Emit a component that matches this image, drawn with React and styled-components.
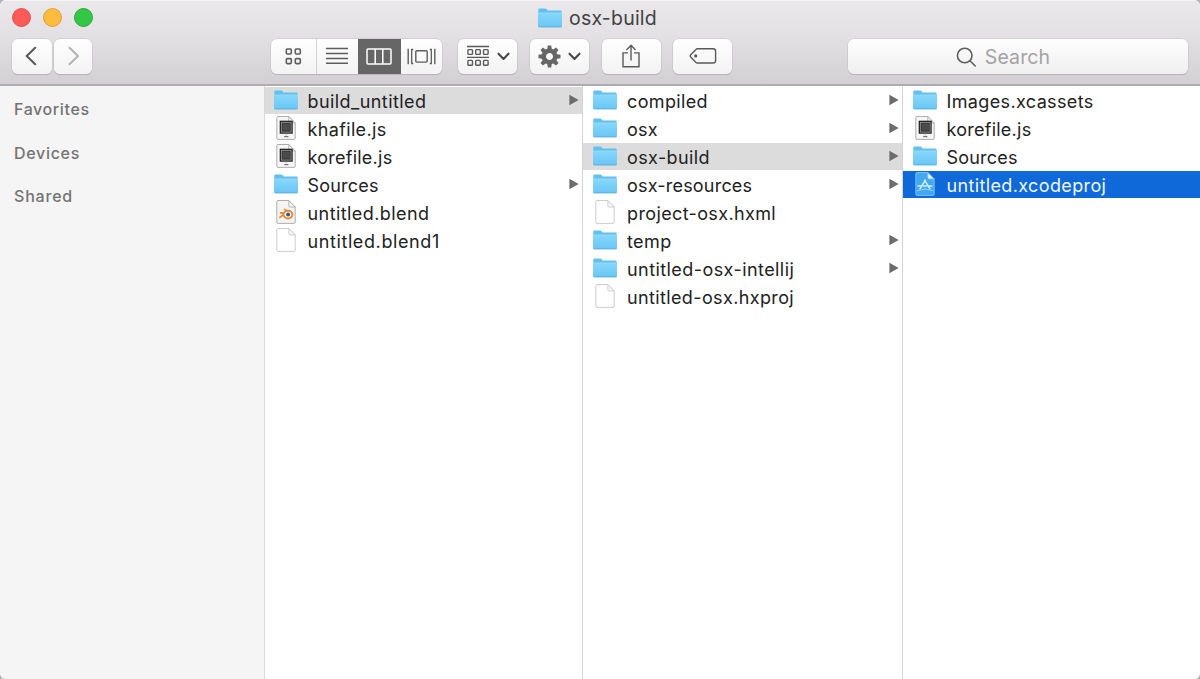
import React from "react";
import styled, { createGlobalStyle } from "styled-components";

const Global = createGlobalStyle`
  * { box-sizing: border-box; }
  body { margin: 0; background: #b4b4b4; }
`;

const Window = styled.div`
  width: 1200px;
  height: 679px;
  display: flex;
  flex-direction: column;
  overflow: hidden;
  border-radius: 6px;
  background: #fff;
  color: #222;
  font-family: Inter, "Liberation Sans", sans-serif;
`;

const Header = styled.header`
  flex: none;
  height: 86px;
  background: linear-gradient(#eae8eb 0, #e5e2e5 35%, #d2d0d3 100%);
  border-top: 1px solid #f5f4f5;
  border-bottom: 2px solid #b0adb0;
`;

const TitleBar = styled.div`
  height: 33px;
  display: grid;
  grid-template-columns: 1fr auto 1fr;
  align-items: center;
  padding: 0 18px 0 12px;
`;

const Lights = styled.div`
  display: flex;
  gap: 12.2px;
`;

const Light = styled.span`
  width: 19px;
  height: 19px;
  border-radius: 50%;
  background: ${(p) => p.$fill};
  border: 1px solid ${(p) => p.$edge};
`;

const Title = styled.div`
  display: flex;
  align-items: center;
  gap: 6px;
  font-size: 19.5px;
  line-height: 30px;
  letter-spacing: 0.2px;
  color: #424142;
`;

const ToolBar = styled.div`
  height: 44px;
  display: flex;
  align-items: center;
  padding: 0 12px;
`;

const Button = styled.button`
  height: 35px;
  width: ${(p) => p.$width}px;
  margin: 0 ${(p) => p.$after || 0}px 0 0;
  padding: 0 ${(p) => p.$padRight || 0}px 0 ${(p) => p.$padLeft || 0}px;
  display: flex;
  align-items: center;
  justify-content: center;
  gap: 7px;
  border: 0;
  border-radius: 6px;
  background: linear-gradient(#fefefe, #f4f3f4);
  box-shadow: 0 0 0 0.5px #c4c2c4, 0 1px 1px #aaa8aa;
  color: #5a5a5a;
`;

const Segments = styled.div`
  height: 35px;
  display: flex;
  margin-right: 16px;
  overflow: hidden;
  border-radius: 6px;
  background: linear-gradient(#fefefe, #f4f3f4);
  box-shadow: 0 0 0 0.5px #c4c2c4, 0 1px 1px #aaa8aa;
`;

const Segment = styled.div`
  width: ${(p) => p.$width}px;
  padding-right: ${(p) => p.$padRight || 0}px;
  display: flex;
  align-items: center;
  justify-content: center;
  border-right: ${(p) => (p.$divided ? "1px solid #d3d2d3" : "0")};
  color: ${(p) => (p.$active ? "#fff" : "#5d5d5d")};
  background: ${(p) => (p.$active ? "#676667" : "transparent")};
`;

const Search = styled.div`
  width: 340px;
  height: 35px;
  margin-left: auto;
  padding: 2px 30px 0 0;
  display: flex;
  align-items: center;
  justify-content: center;
  gap: 8px;
  border-radius: 6px;
  background: linear-gradient(#fefefe, #f0eff0);
  box-shadow: 0 0 0 0.5px #c4c2c4, 0 1px 1px #aaa8aa;
  color: #a3a2a3;
  font-size: 19.5px;
  letter-spacing: 0.1px;
`;

const Body = styled.main`
  flex: 1;
  min-height: 0;
  display: grid;
  grid-template-columns: 265px 318px 320px 1fr;
`;

const Sidebar = styled.nav`
  display: flex;
  flex-direction: column;
  gap: 19.5px;
  padding: 11px 14px;
  background: #f5f5f5;
  border-right: 1px solid #d9d9d9;
`;

const SideLabel = styled.div`
  height: 24px;
  line-height: 24px;
  font-size: 16px;
  font-weight: 500;
  letter-spacing: ${(p) => p.$spacing}px;
  color: #737373;
`;

const Column = styled.section`
  display: flex;
  flex-direction: column;
  gap: 1px;
  padding-top: 1px;
  background: #fff;
  border-right: ${(p) => (p.$last ? "0" : "1px solid #d4d4d4")};
`;

const Row = styled.div`
  height: 27px;
  display: flex;
  align-items: center;
  padding: 0 3px 0 ${(p) => p.$inset}px;
  background: ${(p) => (p.$tone === "blue" ? "#0f69d8" : p.$tone === "gray" ? "#dcdcdc" : "transparent")};
  color: ${(p) => (p.$tone === "blue" ? "#f2f7ff" : "#222")};
`;

const IconSlot = styled.span`
  width: 26px;
  height: 27px;
  flex: none;
  display: flex;
  align-items: center;
  justify-content: center;
  padding-bottom: 1px;
  margin-right: ${(p) => p.$gap}px;
`;

const Name = styled.span`
  flex: 1;
  padding-top: 3px;
  white-space: nowrap;
  font-size: 18px;
  line-height: 26px;
  letter-spacing: ${(p) => p.$spacing}px;
`;

const Folder = () => (
  <svg width="26" height="20" viewBox="0 0 26 20">
    <defs>
      <linearGradient id="folder" x1="0" y1="0" x2="0" y2="1">
        <stop offset="0" stopColor="#88d7fb" />
        <stop offset="1" stopColor="#6ac6f6" />
      </linearGradient>
    </defs>
    <path d="M1.3 1.7Q1.3 .5 2.5 .5H8.2Q9 .5 9.5 1.1L10.5 2.6H23.6Q24.7 2.6 24.7 3.8V18.3H1.3Z" fill="#63bfed" />
    <path d="M1 4.9H25V17.6Q25 19 23.7 19H2.3Q1 19 1 17.6Z" fill="url(#folder)" />
    <path d="M1.2 4.9H24.8" stroke="#9be0fc" strokeWidth=".7" />
    <path d="M1.3 18.5Q1.8 19 2.6 19H23.4Q24.3 19 24.8 18.5" fill="none" stroke="#4fa9d9" strokeWidth=".8" />
  </svg>
);

const Sheet = ({ fill = "#fff", edge = "#c6c6c6", fold = "#f6f6f6", children }) => (
  <svg width="20" height="24" viewBox="0 0 20 24">
    <path d="M2 .5H12.8L19.2 7V22.2Q19.2 23.4 18 23.4H2Q.8 23.4 .8 22.2V1.7Q.8 .5 2 .5Z" fill={fill} stroke={edge} strokeWidth=".9" />
    <path d="M12.8 .5V5.8Q12.8 7 14 7H19.2Z" fill={fold} stroke={edge} strokeWidth=".8" />
    {children}
  </svg>
);

const Script = () => (
  <Sheet fill="#f6f6f6" edge="#a6a6a6">
    <rect x="3.7" y="4.7" width="13" height="13" fill="#1c1c1c" />
    <rect x="5.3" y="6.3" width="9.8" height="9.8" fill="#3a3a3a" stroke="#a2a2a2" strokeWidth=".8" />
    <rect x="6.8" y="7.8" width="6.8" height="6.4" fill="#4c4c4c" />
    <path d="M10.2 17.8V19.6" stroke="#bbb" strokeWidth="1.2" />
    <path d="M8.2 20.6H12.4" stroke="#777" strokeWidth="1.2" />
  </Sheet>
);

const Blend = () => (
  <Sheet fill="#f4f4f4" edge="#a6a6a6">
    <path d="M3.9 17.4L9.6 13H4.6M8.6 9.4L14.2 13" fill="none" stroke="#e98a2d" strokeWidth="1.8" strokeLinecap="round" strokeLinejoin="round" />
    <ellipse cx="12" cy="14.6" rx="4.4" ry="3.8" fill="#fff" stroke="#e98a2d" strokeWidth="2" />
    <circle cx="12.1" cy="14.5" r="2.1" fill="#24609e" />
  </Sheet>
);

const Project = () => (
  <Sheet fill="#42a8f0" edge="#7cc4f6" fold="#e5f5ff">
    <g fill="none" stroke="#d4eeff" strokeWidth="1.5" strokeLinecap="round">
      <path d="M10.4 8.2L5 16.6M9.5 8.2L14.9 16.6" />
      <path d="M3 14H6.6M8.4 14H11.6M14 14H17" />
      <path d="M2.6 18.4Q10 15.6 17.4 18.4" strokeWidth=".6" />
    </g>
  </Sheet>
);

const icons = { folder: Folder, sheet: Sheet, script: Script, blend: Blend, project: Project };

const ArrowSvg = styled.svg`
  flex: none;
  margin-bottom: 1px;
`;

const Arrow = () => (
  <ArrowSvg width="10" height="12" viewBox="0 0 10 12">
    <path d="M.4 .7L9.6 6L.4 11.3Z" fill="#6c6c6c" />
  </ArrowSvg>
);

const Chevron = () => (
  <svg width="13" height="9" viewBox="0 0 13 9" fill="none" stroke="#484848" strokeWidth="2.1" strokeLinecap="round" strokeLinejoin="round">
    <path d="M1.5 1.7L6.5 6.9L11.5 1.7" />
  </svg>
);

const Angle = ({ flip, color }) => (
  <svg width="12" height="20" viewBox="0 0 12 20" fill="none" stroke={color} strokeWidth="2.1" strokeLinecap="round" strokeLinejoin="round">
    <path d={flip ? "M1.5 1.8L10 10L1.5 18.2" : "M10.2 1.8L1.7 10L10.2 18.2"} />
  </svg>
);

const Grid = () => (
  <svg width="17" height="17" viewBox="0 0 17 17" fill="none" stroke="currentColor" strokeWidth="1.6">
    {[1.3, 10.3].map((x) => [1, 10.6].map((y) => <rect key={`${x}${y}`} x={x} y={y} width="5" height="5" rx="1" />))}
  </svg>
);

const Lines = () => (
  <svg width="24" height="18" viewBox="0 0 24 18" stroke="currentColor" strokeWidth="1.5">
    <path d="M1 1.6H23M1 6.5H23M1 11.4H23M1 16.3H23" />
  </svg>
);

const Columns = () => (
  <svg width="26" height="17" viewBox="0 0 26 17" fill="none" stroke="currentColor" strokeWidth="1.5">
    <rect x="1" y="1" width="24" height="15" rx="1" />
    <path d="M9.2 1V16M16.8 1V16" />
  </svg>
);

const Flow = () => (
  <svg width="29" height="17" viewBox="0 0 29 17" fill="none" stroke="currentColor" strokeWidth="1.4">
    <rect x="8.8" y="2.7" width="11.4" height="11.4" rx="1" />
    <path d="M1.2 .8V16.2M27.8 .8V16.2" />
    <path d="M6.2 1.5H4.7V15.5H6.2M22.8 1.5H24.3V15.5H22.8" strokeWidth="1.3" />
  </svg>
);

const Arrange = () => (
  <svg width="24" height="22" viewBox="0 0 24 22" fill="none" stroke="currentColor" strokeWidth="1.4">
    <path d="M1 1.5H23M1 12.4H23" />
    {[1.9, 9.7, 17.5].map((x) => [4.6, 15.4].map((y) => <rect key={`${x}${y}`} x={x} y={y} width="4.6" height="4.8" rx=".8" />))}
  </svg>
);

const Gear = () => (
  <svg width="23" height="23" viewBox="-11.5 -11.5 23 23" fill="#666">
    {[0, 45, 90, 135, 180, 225, 270, 315].map((a) => (
      <path key={a} d="M-2.5 -6L-1.7 -11H1.7L2.5 -6Z" transform={`rotate(${a})`} />
    ))}
    <circle r="5.7" fill="none" stroke="#666" strokeWidth="4.4" />
  </svg>
);

const Share = () => (
  <svg width="20" height="25" viewBox="0 0 20 25" fill="none" stroke="currentColor" strokeWidth="1.4">
    <path d="M7 8.9H2V22.8H18V8.9H13M10 16.5V1.6M5.5 5.9L10 1.3L14.5 5.9" />
  </svg>
);

const Tag = () => (
  <svg width="28" height="18" viewBox="0 0 28 18" fill="none" stroke="currentColor" strokeWidth="1.4">
    <path d="M8.4 1.8H24Q26.6 1.8 26.6 4.4V13.4Q26.6 16 24 16H8.4Q7.6 16 7 15.4L1.7 10Q.8 8.9 1.7 7.8L7 2.4Q7.6 1.8 8.4 1.8Z" />
    <circle cx="6.7" cy="8.9" r=".9" fill="currentColor" />
  </svg>
);

const Lens = () => (
  <svg width="21" height="21" viewBox="0 0 21 21" fill="none" stroke="#5f5f5f" strokeWidth="1.6" strokeLinecap="round">
    <circle cx="8.7" cy="8.5" r="7.3" />
    <path d="M14 13.8L19.2 19" />
  </svg>
);

const sidebar = [["Favorites", 0.6], ["Devices", 0.7], ["Shared", 0.8]];

const columns = [
  {
    inset: 8,
    gap: 8.5,
    items: [
      { name: "build_untitled", icon: "folder", arrow: true, tone: "gray", spacing: 0.43 },
      { name: "khafile.js", icon: "script", spacing: 0.35 },
      { name: "korefile.js", icon: "script", spacing: 0.25 },
      { name: "Sources", icon: "folder", arrow: true, spacing: 0.2 },
      { name: "untitled.blend", icon: "blend", spacing: 0.43 },
      { name: "untitled.blend1", icon: "sheet", spacing: 0.6 },
    ],
  },
  {
    inset: 9,
    gap: 9,
    items: [
      { name: "compiled", icon: "folder", arrow: true, spacing: 0.35 },
      { name: "osx", icon: "folder", arrow: true, spacing: 0.2 },
      { name: "osx-build", icon: "folder", arrow: true, tone: "gray", spacing: 0.4 },
      { name: "osx-resources", icon: "folder", arrow: true, spacing: 0.2 },
      { name: "project-osx.hxml", icon: "sheet", spacing: 0.37 },
      { name: "temp", icon: "folder", arrow: true, spacing: 0.4 },
      { name: "untitled-osx-intellij", icon: "folder", arrow: true, spacing: 0.43 },
      { name: "untitled-osx.hxproj", icon: "sheet", spacing: 0.37 },
    ],
  },
  {
    inset: 9,
    gap: 8.5,
    items: [
      { name: "Images.xcassets", icon: "folder", spacing: 0.37 },
      { name: "korefile.js", icon: "script", spacing: 0.25 },
      { name: "Sources", icon: "folder", spacing: 0.2 },
      { name: "untitled.xcodeproj", icon: "project", tone: "blue", spacing: 0.37 },
    ],
  },
];

function FileRow({ item, inset, gap }) {
  const Icon = icons[item.icon];
  return (
    <Row $tone={item.tone} $inset={inset}>
      <IconSlot $gap={gap}><Icon /></IconSlot>
      <Name $spacing={item.spacing}>{item.name}</Name>
      {item.arrow && <Arrow />}
    </Row>
  );
}

export default function App() {
  return (
    <>
      <Global />
      <Window>
        <Header>
          <TitleBar>
            <Lights>
              <Light $fill="#fc5b57" $edge="#e2504d" />
              <Light $fill="#fdbc40" $edge="#e0a033" />
              <Light $fill="#33c748" $edge="#27a93a" />
            </Lights>
            <Title><Folder />osx-build</Title>
          </TitleBar>
          <ToolBar>
            <Button $width={40} $after={2} $padRight={3}><Angle color="#5a5a5a" /></Button>
            <Button $width={38} $after={179} $padLeft={2}><Angle flip color="#b4b4b4" /></Button>
            <Segments>
              <Segment $width={46} $divided><Grid /></Segment>
              <Segment $width={41} $padRight={2}><Lines /></Segment>
              <Segment $width={43} $active $padRight={2}><Columns /></Segment>
              <Segment $width={41}><Flow /></Segment>
            </Segments>
            <Button $width={59} $after={13}><Arrange /><Chevron /></Button>
            <Button $width={59} $after={13}><Gear /><Chevron /></Button>
            <Button $width={59} $after={12} $padRight={1}><Share /></Button>
            <Button $width={59}><Tag /></Button>
            <Search><Lens />Search</Search>
          </ToolBar>
        </Header>
        <Body>
          <Sidebar>
            {sidebar.map(([label, spacing]) => <SideLabel key={label} $spacing={spacing}>{label}</SideLabel>)}
          </Sidebar>
          {columns.map(({ items, inset, gap }, i) => (
            <Column key={i} $last={i === columns.length - 1}>
              {items.map((item) => <FileRow key={item.name} item={item} inset={inset} gap={gap} />)}
            </Column>
          ))}
        </Body>
      </Window>
    </>
  );
}
